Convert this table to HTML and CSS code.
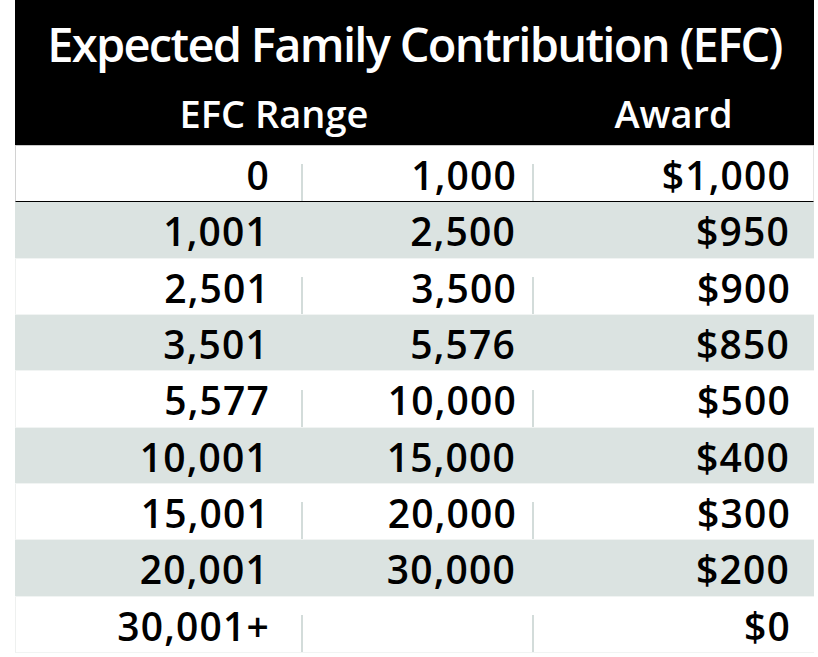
FILE: index.html
```html
<!DOCTYPE html>
<html lang="en">
<head>
<meta charset="utf-8">
<title>Expected Family Contribution (EFC)</title>
<link rel="stylesheet" href="styles.css">
</head>
<body>
<div class="efc">
  <div class="head">
    <h1 class="title">Expected Family Contribution (EFC)</h1>
    <div class="subhead">
      <div class="sub-range">EFC Range</div>
      <div class="sub-award">Award</div>
    </div>
  </div>
  <div class="row white first">
    <div class="cell c1 div">0</div><div class="cell c2 div">1,000</div><div class="cell c3">$1,000</div>
  </div>
  <div class="row grey">
    <div class="cell c1">1,001</div><div class="cell c2">2,500</div><div class="cell c3">$950</div>
  </div>
  <div class="row white">
    <div class="cell c1 div">2,501</div><div class="cell c2 div">3,500</div><div class="cell c3">$900</div>
  </div>
  <div class="row grey">
    <div class="cell c1">3,501</div><div class="cell c2">5,576</div><div class="cell c3">$850</div>
  </div>
  <div class="row white">
    <div class="cell c1 div">5,577</div><div class="cell c2 div">10,000</div><div class="cell c3">$500</div>
  </div>
  <div class="row grey">
    <div class="cell c1">10,001</div><div class="cell c2">15,000</div><div class="cell c3">$400</div>
  </div>
  <div class="row white">
    <div class="cell c1 div">15,001</div><div class="cell c2 div">20,000</div><div class="cell c3">$300</div>
  </div>
  <div class="row grey">
    <div class="cell c1">20,001</div><div class="cell c2">30,000</div><div class="cell c3">$200</div>
  </div>
  <div class="row white">
    <div class="cell c1 div">30,001+</div><div class="cell c2 div"></div><div class="cell c3">$0</div>
  </div>
</div>
</body>
</html>
```
FILE: styles.css
```css
html, body {
  margin: 0;
  padding: 0;
  background: #ffffff;
}
body {
  font-family: "Open Sans", "Noto Sans", sans-serif;
  color: #000;
}
.efc {
  width: 799px;
  margin-left: 15px;
}
.head {
  background: #000;
  color: #fff;
  height: 146px;
  border-bottom: 1px solid #c9c9c9;
  box-sizing: border-box;
}
.title {
  margin: 0;
  font-weight: 600;
  font-size: 47px;
  line-height: 47px;
  padding-top: 21px;
  text-align: center;
  letter-spacing: -1.7px;
}
.subhead {
  display: grid;
  grid-template-columns: 518px 281px;
  margin-top: 25px;
  font-weight: 600;
  font-size: 38px;
  line-height: 40px;
}
.sub-range, .sub-award {
  text-align: center;
}
.row {
  display: grid;
  grid-template-columns: 287px 231px 281px;
  height: 56.33px;
  box-sizing: border-box;
  border-bottom: 1px solid #f1f4f3;
}
.row.white {
  background: #fff;
  border-left: 1px solid #eef0ef;
}
.row.first {
  border-left-color: #d2d2d2;
  border-right: 1px solid #e4e4e4;
  border-bottom: 1px solid #000;
}
.row.grey {
  background: #dbe3e1;
}
.cell {
  font-weight: 600;
  font-size: 39px;
  letter-spacing: 1.2px;
  line-height: 52px;
  padding-top: 3px;
  text-align: right;
  white-space: nowrap;
}
.c1 { padding-right: 33px; }
.c2 { padding-right: 17px; }
.c3 { padding-right: 24px; }
.cell.div {
  background: linear-gradient(#d3dcda, #d3dcda) right bottom / 2px 37px no-repeat;
}
```
